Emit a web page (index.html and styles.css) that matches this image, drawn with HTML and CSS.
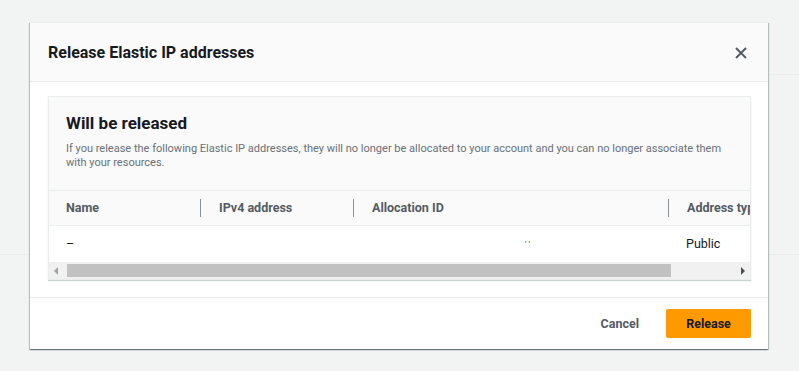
FILE: index.html
```html
<!DOCTYPE html>
<html lang="en">
<head>
  <meta charset="UTF-8">
  <title>Release Elastic IP addresses</title>
  <link rel="stylesheet" href="styles.css">
</head>
<body>
  <div class="modal">
    <div class="modal-header">
      <h2>Release Elastic IP addresses</h2>
      <button class="close-btn" aria-label="Close">
        <svg width="12" height="12" viewBox="0 0 12 12"><path d="M1 1 L11 11 M11 1 L1 11" stroke="#545b64" stroke-width="2" fill="none"/></svg>
      </button>
    </div>
    <div class="modal-body">
      <div class="panel">
        <div class="panel-head">
          <h3>Will be released</h3>
          <p>If you release the following Elastic IP addresses, they will no longer be allocated to your account and you can no longer associate them with your resources.</p>
        </div>
        <div class="table-wrap">
          <div class="table">
            <div class="row head-row">
              <div class="cell col-name">Name</div>
              <div class="cell col-ip">IPv4 address</div>
              <div class="cell col-alloc">Allocation ID</div>
              <div class="cell col-type">Address type</div>
            </div>
            <div class="row">
              <div class="cell col-name">–</div>
              <div class="cell col-ip"></div>
              <div class="cell col-alloc"><span class="redacted">' '</span></div>
              <div class="cell col-type">Public</div>
            </div>
          </div>
          <div class="scrollbar">
            <span class="arrow arrow-left"></span>
            <div class="thumb"></div>
            <span class="arrow arrow-right"></span>
          </div>
        </div>
      </div>
    </div>
    <div class="modal-footer">
      <button class="btn-link">Cancel</button>
      <button class="btn-primary">Release</button>
    </div>
  </div>
</body>
</html>
```

FILE: styles.css
```css
body {
  margin: 0;
  padding: 22px 0 0 29px;
  height: 371px;
  box-sizing: border-box;
  overflow: hidden;
  font-family: Roboto, Arial, sans-serif;
  color: #16191f;
  background:
    linear-gradient(#eaeded, #eaeded) 0 254px / 100% 1px no-repeat,
    linear-gradient(#eaeded, #eaeded) 769px 74px / 30px 1px no-repeat,
    #f2f3f3;
}
button {
  font-family: inherit;
  border: none;
  background: none;
  cursor: pointer;
  padding: 0;
}
.modal {
  width: 738px;
  background: #fff;
  border-top: 1px solid #eaeded;
  box-shadow: 0 1px 1px 0 rgba(0, 28, 36, 0.35), 1px 1px 1px 0 rgba(0, 28, 36, 0.2), -1px 1px 1px 0 rgba(0, 28, 36, 0.2);
  margin-left: 1px;
}
.modal-header {
  height: 58px;
  background: #fafafa;
  border-bottom: 1px solid #eaeded;
  display: flex;
  align-items: center;
  justify-content: space-between;
  padding: 0 20px 0 18px;
}
.modal-header h2 {
  margin: 0;
  font-size: 16px;
  font-weight: 700;
}
.close-btn {
  width: 14px;
  height: 14px;
  display: flex;
  align-items: center;
  justify-content: center;
  margin-top: 2px;
}
.modal-body {
  padding: 14px 17px 17px 18px;
}
.panel {
  border: 1px solid #eaeded;
  background: #fafafa;
  box-shadow: 0 1px 1px rgba(0, 28, 36, 0.2);
}
.panel-head {
  padding: 14px 18px 20px 17px;
}
.panel-head h3 {
  margin: 0 0 7px 0;
  font-size: 17px;
  font-weight: 700;
  line-height: 24px;
}
.panel-head p {
  margin: 0;
  font-size: 11px;
  line-height: 14px;
  color: #687078;
}
.table-wrap {
  border-top: 1px solid #eaeded;
  overflow: hidden;
}
.table {
  width: 760px;
}
.row {
  display: flex;
  height: 36px;
  align-items: center;
  background: #fff;
  font-size: 12.5px;
}
.head-row {
  height: 34px;
  background: #fafafa;
  border-bottom: 1px solid #eaeded;
  font-weight: 700;
  color: #545b64;
}
.cell {
  padding-left: 18px;
  box-sizing: border-box;
  height: 18px;
  line-height: 18px;
  white-space: nowrap;
}
.head-row .cell + .cell {
  border-left: 1px solid #879596;
}
.col-name { width: 151px; padding-left: 17px; }
.col-ip { width: 153px; }
.col-alloc { width: 315px; }
.col-type { width: 140px; }
.redacted {
  margin-left: 154px;
  font-size: 8px;
  vertical-align: top;
  color: #16191f;
}
.scrollbar {
  height: 17px;
  background: #f1f1f1;
  display: flex;
  align-items: center;
}
.arrow {
  width: 0;
  height: 0;
  border-top: 4px solid transparent;
  border-bottom: 4px solid transparent;
}
.arrow-left {
  border-right: 4px solid #a3a3a3;
  margin: 0 9px 0 5px;
}
.arrow-right {
  border-left: 4px solid #505050;
  margin: 0 5px 0 70px;
}
.thumb {
  width: 606px;
  height: 13px;
  background: #c1c1c1;
}
.modal-footer {
  border-top: 1px solid #eaeded;
  display: flex;
  justify-content: flex-end;
  align-items: center;
  gap: 27px;
  padding: 11px 17px 11px 18px;
}
.btn-link {
  font-size: 12.5px;
  font-weight: 700;
  color: #545b64;
}
.btn-primary {
  width: 85px;
  height: 29px;
  background: #ff9900;
  border-radius: 2px;
  font-size: 12.5px;
  font-weight: 700;
  color: #16191f;
}
```
